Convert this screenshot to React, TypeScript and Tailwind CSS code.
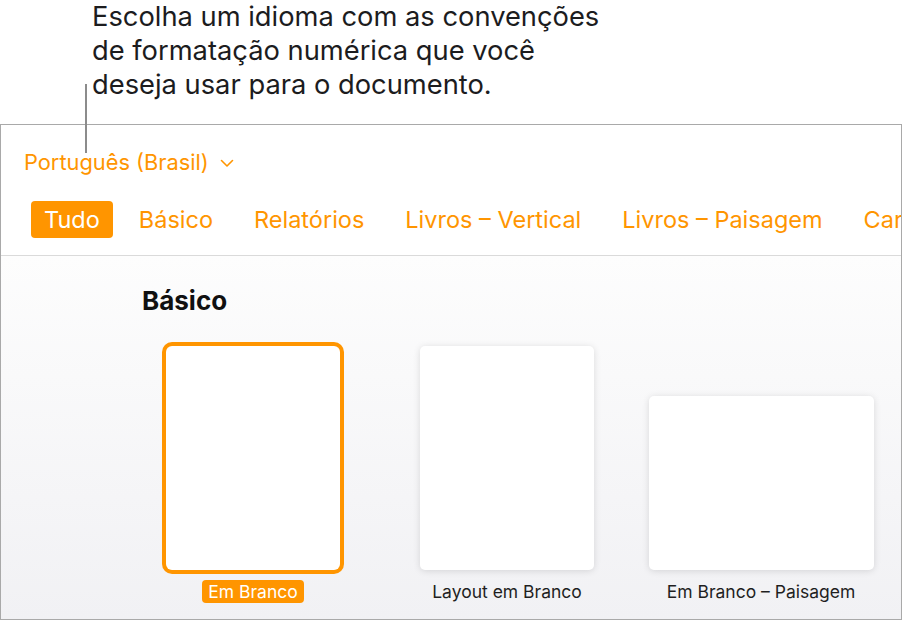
import React from 'react';

const tabs = ['Tudo', 'Básico', 'Relatórios', 'Livros – Vertical', 'Livros – Paisagem', 'Cartas'];

function Chevron() {
  return (
    <svg width="14" height="9" viewBox="0 0 14 9" fill="none" className="ml-[11px] mt-[2px]">
      <path d="M1.5 1.5 L7 7 L12.5 1.5" stroke="#ff9500" strokeWidth="1.6" strokeLinecap="round" strokeLinejoin="round" />
    </svg>
  );
}

function Template({ w, h, label, selected }: { w: number; h: number; label: string; selected?: boolean }) {
  return (
    <div className="flex w-[254px] flex-col items-center">
      <div
        className={
          selected
            ? 'rounded-[6px] bg-white ring-4 ring-[#ff9500]'
            : 'rounded-[5px] bg-white shadow-[0_1px_7px_rgba(0,0,0,0.13)]'
        }
        style={{ width: w, height: h }}
      />
      <div
        className={
          selected
            ? 'mt-[10px] h-[23px] whitespace-nowrap rounded-[4px] bg-[#ff9500] px-[6px] text-[17.5px] leading-[23px] text-white'
            : 'mt-[10px] h-[23px] whitespace-nowrap text-[17.5px] leading-[23px] text-[#1f1f1f]'
        }
      >
        {label}
      </div>
    </div>
  );
}

export default function App() {
  return (
    <div className="relative h-[622px] w-[904px] overflow-hidden bg-white font-['Inter','Noto_Sans',sans-serif]">
      {/* callout */}
      <div className="h-[124px] whitespace-nowrap pl-[92px] text-[27.3px] leading-[34px] text-[#1c1c1e]">
        Escolha um idioma com as convenções
        <br />
        de formatação numérica que você
        <br />
        deseja usar para o documento.
      </div>
      <div className="absolute left-[85px] top-[84px] h-[69px] w-[2px] bg-[#8c8c8c]" />

      <div className="flex h-[496px] w-[902px] flex-col border border-[#a9a9a9]">
        <div className="h-[131px] border-b border-[#dadada] bg-white">
          <div className="flex items-center pl-[23px] pt-[24px] text-[21.8px] leading-[26px] text-[#ff9500]">
            Português (Brasil)
            <Chevron />
          </div>
          {/* the last tab runs past the frame edge, as in the app */}
          <div className="mt-[26px] flex gap-[11px] overflow-hidden whitespace-nowrap pl-[30px]">
            {tabs.map((t, i) => (
              <div
                key={t}
                className={
                  i === 0
                    ? 'h-[37px] shrink-0 rounded-[4px] bg-[#ff9500] px-[13px] text-[23.5px] leading-[37px] text-white'
                    : 'h-[37px] shrink-0 px-[15px] text-[23.5px] leading-[37px] text-[#ff9500]'
                }
              >
                {t}
              </div>
            ))}
          </div>
        </div>

        <div className="flex flex-1 flex-col bg-gradient-to-b from-[#fdfdfd] to-[#f1f1f4] pl-[125px] pt-[30px]">
          <div className="ml-[16px] text-[26px] font-bold leading-[30px] text-[#111]">Básico</div>
          <div className="mt-[30px] flex items-end">
            <Template w={174} h={224} label="Em Branco" selected />
            <Template w={174} h={224} label="Layout em Branco" />
            <Template w={225} h={174} label="Em Branco – Paisagem" />
          </div>
        </div>
      </div>
    </div>
  );
}
